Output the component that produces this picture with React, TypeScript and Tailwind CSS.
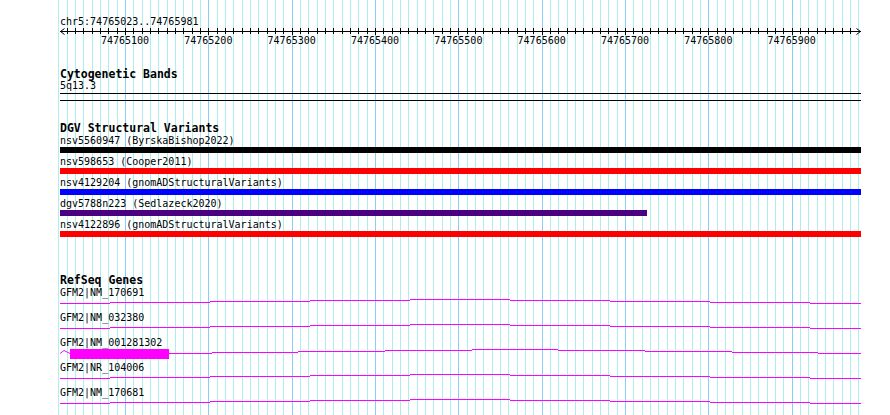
const MINOR = "#aeeeee";
const MAJOR = "#87cefa";
const GENE = "#ff00ff";

const gridLines = Array.from({ length: 97 }, (_, i) => {
  const k = i - 8;
  return { x: Math.round(125 + (k * 25) / 3), major: k % 10 === 0 };
});

const rulerLabels = Array.from({ length: 9 }, (_, i) => ({
  x: 125 + (i * 250) / 3,
  text: String(74765100 + i * 100),
}));

const variants = [
  { label: "nsv5560947 (ByrskaBishop2022)", bar: "bg-black w-[801px]" },
  { label: "nsv598653 (Cooper2011)", bar: "bg-[#ff0000] w-[801px]" },
  { label: "nsv4129204 (gnomADStructuralVariants)", bar: "bg-[#0000ff] w-[801px]" },
  { label: "dgv5788n223 (Sedlazeck2020)", bar: "bg-[#4b0082] w-[587px]" },
  { label: "nsv4122896 (gnomADStructuralVariants)", bar: "bg-[#ff0000] w-[801px]" },
];

const levels = [5, 4, 3, 2, 1, 2, 3, 4, 5];
const stdStops = [60, 110, 210, 310, 410, 510, 610, 710, 810, 861];
const altStops = [169, 212, 298, 385, 472, 558, 645, 732, 818, 861];

const genes = [
  { label: "GFM2|NM_170691", stops: stdStops, exon: false },
  { label: "GFM2|NM_032380", stops: stdStops, exon: false },
  { label: "GFM2|NM_001281302", stops: altStops, exon: true },
  { label: "GFM2|NR_104006", stops: stdStops, exon: false },
  { label: "GFM2|NM_170681", stops: stdStops, exon: false },
];

const text = "font-['DejaVu_Sans_Mono',monospace] text-[10px] leading-[10px] h-[10px] whitespace-nowrap text-black";
const title = "font-['DejaVu_Sans_Mono',monospace] text-[11.5px] leading-[12px] h-[12px] font-bold whitespace-nowrap text-black";

function Grid() {
  return (
    <svg className="absolute inset-0" width={890} height={415} shapeRendering="crispEdges">
      {gridLines.map((g) => (
        <rect key={g.x} x={g.x} y={0} width={1} height={415} fill={g.major ? MAJOR : MINOR} />
      ))}
    </svg>
  );
}

function Ruler() {
  return (
    <svg className="block -ml-[60px]" width={890} height={20}>
      <rect x={60} y={4} width={801} height={1} fill="#000" shapeRendering="crispEdges" />
      {gridLines
        .filter((g) => g.x > 62 && g.x < 856)
        .map((g) => (
          <rect key={g.x} x={g.x} y={1} width={1} height={g.major ? 7 : 6} fill="#000" shapeRendering="crispEdges" />
        ))}
      <polyline points="64.5,1.5 60.5,4.5 64.5,7.5" fill="none" stroke="#000" strokeWidth={1} />
      <polyline points="856.5,1.5 860.5,4.5 856.5,7.5" fill="none" stroke="#000" strokeWidth={1} />
      {rulerLabels.map((l) => (
        <text key={l.text} x={l.x} y={17} textAnchor="middle" fontFamily="'DejaVu Sans Mono', monospace" fontSize={10} fill="#000">
          {l.text}
        </text>
      ))}
    </svg>
  );
}

function GeneGlyph({ stops, exon }: { stops: number[]; exon: boolean }) {
  return (
    <svg className="block" width={801} height={15} viewBox="60 0 801 15">
      {exon && (
        <>
          <polyline points="60,5.5 64,2.5 70,5.5" fill="none" stroke={GENE} strokeWidth={1} />
          <rect x={70} y={1} width={99} height={10} fill={GENE} shapeRendering="crispEdges" />
        </>
      )}
      {levels.map((lv, i) => (
        <rect
          key={i}
          x={stops[i]}
          y={lv}
          width={stops[i + 1] - stops[i]}
          height={1}
          fill={GENE}
          shapeRendering="crispEdges"
        />
      ))}
    </svg>
  );
}

export default function App() {
  return (
    <div className="relative w-[890px] h-[415px] overflow-hidden bg-white">
      <Grid />
      <div className="relative flex flex-col pl-[60px] pt-[17px]">
        <div className={text}>chr5:74765023..74765981</div>
        <Ruler />

        <div className={`${title} mt-[21px]`}>Cytogenetic Bands</div>
        <div className={`${text} mt-px`}>5q13.3</div>
        <div className="mt-[2px] h-px w-[801px] bg-black" />
        <div className="mt-[6px] h-px w-[801px] bg-black" />

        <div className={`${title} mt-[21px]`}>DGV Structural Variants</div>
        <div className="mt-[2px] flex flex-col gap-[4px]">
          {variants.map((v) => (
            <div key={v.label} className="flex flex-col">
              <div className={text}>{v.label}</div>
              <div className={`mt-px h-[6px] ${v.bar}`} />
            </div>
          ))}
        </div>

        <div className={`${title} mt-[37px]`}>RefSeq Genes</div>
        <div className="mt-[2px] flex flex-col">
          {genes.map((g) => (
            <div key={g.label} className="flex flex-col">
              <div className={text}>{g.label}</div>
              <GeneGlyph stops={g.stops} exon={g.exon} />
            </div>
          ))}
        </div>
      </div>
    </div>
  );
}
